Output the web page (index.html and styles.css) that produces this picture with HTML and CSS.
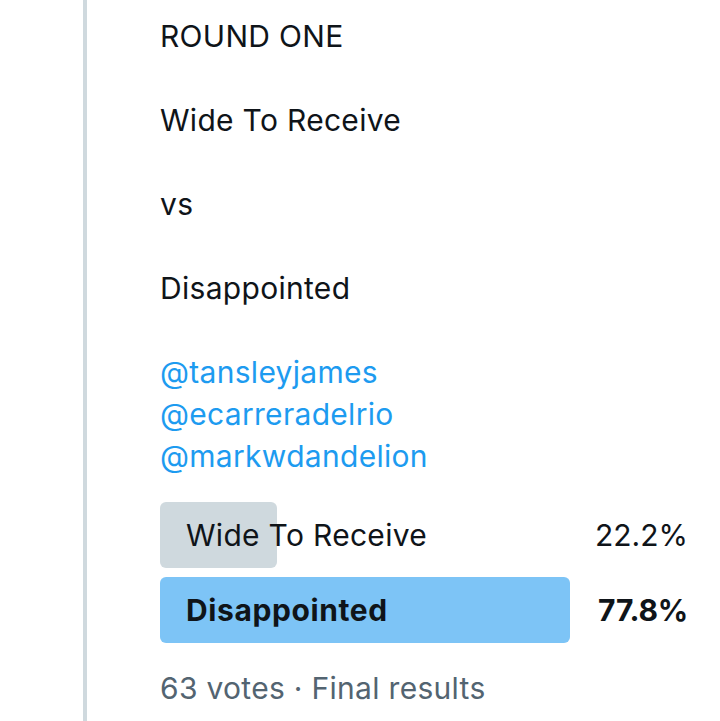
FILE: index.html
```html
<!DOCTYPE html>
<html>
<head>
<meta charset="utf-8">
<link rel="stylesheet" href="styles.css">
</head>
<body>
<div class="thread">
  <div class="rail"></div>
  <div class="tweet">
    <p class="line">ROUND ONE</p>
    <p class="line">Wide To Receive</p>
    <p class="line">vs</p>
    <p class="line">Disappointed</p>
    <p class="mentions"><span class="link">@tansleyjames</span><br><span class="link">@ecarreradelrio</span><br><span class="link">@markwdandelion</span></p>
    <div class="poll">
      <div class="option">
        <div class="fill fill-grey" style="width:22.2%"></div>
        <span class="label">Wide To Receive</span>
        <span class="pct">22.2%</span>
      </div>
      <div class="option winner">
        <div class="fill fill-blue" style="width:77.8%"></div>
        <span class="label">Disappointed</span>
        <span class="pct">77.8%</span>
      </div>
    </div>
    <div class="meta">63 votes · Final results</div>
  </div>
</div>
</body>
</html>
```
FILE: styles.css
```css
html, body {
  margin: 0;
  padding: 0;
  background: #ffffff;
}
body {
  font-family: Inter, Roboto, "Noto Sans", sans-serif;
  color: #0f1419;
  font-size: 30px;
  line-height: 42px;
  letter-spacing: 0.3px;
}
.thread {
  display: flex;
  height: 721px;
  overflow: hidden;
}
.rail {
  width: 4px;
  margin-left: 83px;
  background: #cfd9de;
  flex: none;
}
.tweet {
  margin-left: 73px;
  width: 527px;
  padding-top: 15px;
}
.line {
  margin: 0 0 42px 0;
}
.mentions {
  margin: 0;
}
.link {
  color: #1d9bf0;
}
.poll {
  margin-top: 25px;
  display: flex;
  flex-direction: column;
  gap: 9px;
}
.option {
  position: relative;
  display: flex;
  align-items: center;
  justify-content: space-between;
  height: 66px;
}
.fill {
  position: absolute;
  left: 0;
  top: 0;
  bottom: 0;
  border-radius: 6px;
}
.fill-grey {
  background: #cfd9de;
}
.fill-blue {
  background: #7dc4f6;
}
.label {
  position: relative;
  padding-left: 26px;
}
.pct {
  position: relative;
  letter-spacing: 0;
  margin-right: -1px;
}
.winner .label {
  font-weight: 700;
  letter-spacing: 0.6px;
}
.winner .pct {
  font-weight: 700;
  letter-spacing: -0.2px;
}
.meta {
  margin-top: 24px;
  color: #536471;
}
```
